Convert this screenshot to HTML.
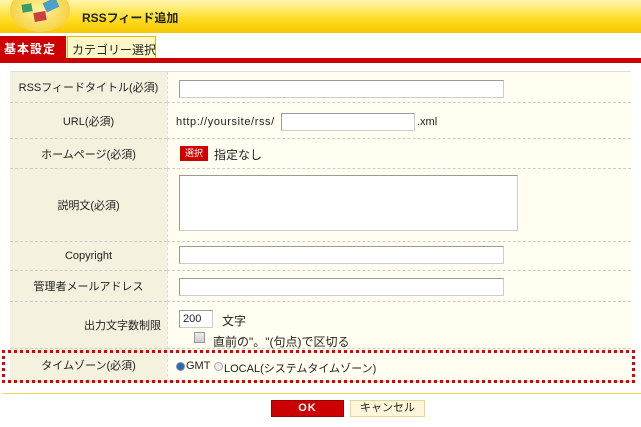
<!DOCTYPE html><html><head><meta charset="utf-8"><style>
*{margin:0;padding:0;box-sizing:border-box}
body{width:641px;height:427px;background:#fff;position:relative;overflow:hidden;font-family:"Liberation Sans","Noto Sans CJK JP",sans-serif;font-size:11px;color:#222}
.a{position:absolute;white-space:nowrap}
.lab{position:absolute;left:10px;width:157px;background:#f4f2de;text-align:center;border-bottom:1px dashed #ccc;display:flex;align-items:center;justify-content:center}
.val{position:absolute;left:167px;width:464px;background:#fffef0;border-bottom:1px dashed #ccc;border-left:1px dashed #ddd}
.in{position:absolute;background:#fff;border:1px solid #999;border-right-color:#ccc;border-bottom-color:#ccc}
</style></head><body>
<div class="a" style="left:0;top:0;width:641px;height:33px;background:linear-gradient(#fff6b0,#ffdc20 60%,#f5c800);"></div>
<div class="a" style="left:10px;top:-12px;width:60px;height:44px;border-radius:50%;background:radial-gradient(#fff3a0,#f2c520)"></div>
<div class="a" style="left:22px;top:4px;width:10px;height:8px;background:#3a9a6a;transform:rotate(-10deg)"></div>
<div class="a" style="left:34px;top:12px;width:12px;height:9px;background:#c84040;transform:rotate(-10deg)"></div>
<div class="a" style="left:44px;top:0px;width:14px;height:10px;background:#4aa0c8;transform:rotate(-25deg)"></div>
<div class="a" style="left:82px;top:9px;font-size:12px;font-weight:bold;color:#222">RSSフィード追加</div>
<div class="a" style="left:0;top:36px;width:66px;height:23px;background:#cc0000;color:#fff;font-size:12px;font-weight:bold;padding:4px 0 0 4px;letter-spacing:1px">基本設定</div>
<div class="a" style="left:67px;top:36px;width:89px;height:23px;background:#fdf6c8;border:1px solid #e4b800;border-bottom:none;font-size:12px;padding:4px 0 0 4px">カテゴリー選択</div>
<div class="a" style="left:0;top:58px;width:641px;height:5px;background:#cc0000"></div>
<div class="a" style="left:10px;top:71px;width:621px;height:1px;background:#ddd"></div>

<div class="lab" style="top:72px;height:31px">RSSフィードタイトル(必須)</div><div class="val" style="top:72px;height:31px"></div>
<div class="lab" style="top:103px;height:36px">URL(必須)</div><div class="val" style="top:103px;height:36px"></div>
<div class="lab" style="top:139px;height:30px">ホームページ(必須)</div><div class="val" style="top:139px;height:30px"></div>
<div class="lab" style="top:169px;height:73px">説明文(必須)</div><div class="val" style="top:169px;height:73px"></div>
<div class="lab" style="top:242px;height:29px">Copyright</div><div class="val" style="top:242px;height:29px"></div>
<div class="lab" style="top:271px;height:31px">管理者メールアドレス</div><div class="val" style="top:271px;height:31px"></div>
<div class="lab" style="top:302px;height:47px;justify-content:flex-end;padding-right:6px">出力文字数制限</div><div class="val" style="top:302px;height:47px"></div>
<div class="lab" style="top:349px;height:33px">タイムゾーン(必須)</div><div class="val" style="top:349px;height:33px"></div>

<div class="in" style="left:179px;top:80px;width:325px;height:18px"></div>
<div class="a" style="left:176px;top:116px;letter-spacing:0.6px">http://yoursite/rss/</div>
<div class="in" style="left:281px;top:113px;width:134px;height:18px"></div>
<div class="a" style="left:417px;top:116px">.xml</div>
<div class="a" style="left:180px;top:146px;width:28px;height:15px;background:#cc0000;color:#fff;font-size:9px;text-align:center;line-height:15px">選択</div>
<div class="a" style="left:214px;top:146px;font-size:12px">指定なし</div>
<div class="in" style="left:179px;top:175px;width:339px;height:56px"></div>
<div class="in" style="left:179px;top:246px;width:325px;height:18px"></div>
<div class="in" style="left:179px;top:278px;width:325px;height:18px"></div>
<div class="in" style="left:179px;top:310px;width:34px;height:18px;padding:2px 3px">200</div>
<div class="a" style="left:222px;top:312px;font-size:12px">文字</div>
<div class="a" style="left:194px;top:332px;width:11px;height:11px;border:1px solid #999;background:linear-gradient(#eee,#ccc)"></div>
<div class="a" style="left:213px;top:333px;font-size:12px">直前の"。"(句点)で区切る</div>
<div class="a" style="left:176px;top:362px;width:9px;height:9px;border-radius:50%;background:#2a6ab0;border:1px solid #88a"></div>
<div class="a" style="left:186px;top:360px">GMT</div>
<div class="a" style="left:214px;top:362px;width:9px;height:9px;border-radius:50%;background:#eee;border:1px solid #aaa"></div>
<div class="a" style="left:224px;top:360px">LOCAL(システムタイムゾーン)</div>
<div class="a" style="left:2px;top:350px;width:633px;height:33px;border:3px dotted #e00000"></div>
<div class="a" style="left:3px;top:393px;width:638px;height:1px;background:#f7d060"></div>
<div class="a" style="left:271px;top:400px;width:73px;height:17px;background:#cc0000;border:1px solid #900;color:#fff;font-weight:bold;font-size:11px;text-align:center;line-height:15px;letter-spacing:1px">OK</div>
<div class="a" style="left:350px;top:400px;width:75px;height:17px;background:#fdf6d8;border:1px solid #e6d49a;text-align:center;line-height:15px">キャンセル</div>
</body></html>
